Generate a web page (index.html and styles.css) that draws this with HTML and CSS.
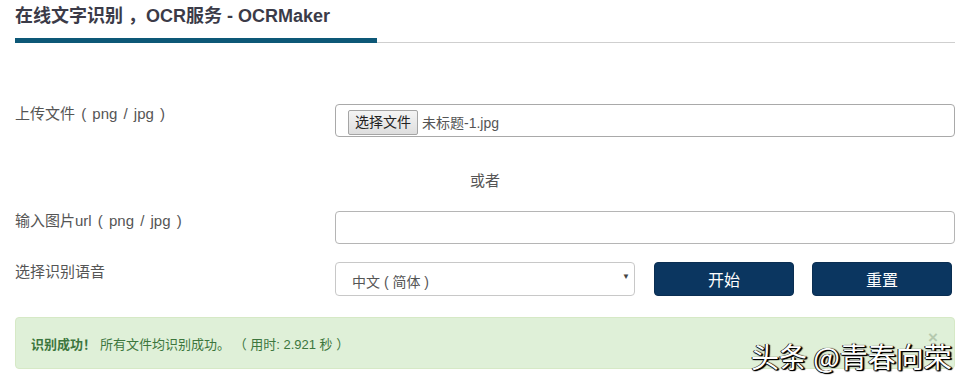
FILE: index.html
```html
<!DOCTYPE html>
<html lang="zh-CN">
<head>
<meta charset="utf-8">
<title>OCRMaker</title>
<link rel="stylesheet" href="styles.css">
</head>
<body>
<div class="page">
  <div class="header">
    <h1 class="title">在线文字识别 ，OCR服务 - OCRMaker</h1>
    <div class="rule"><span class="rule-bar"></span><span class="rule-line"></span></div>
  </div>

  <div class="row row-file">
    <label class="label">上传文件 ( png / jpg )</label>
    <div class="control">
      <div class="file-box"><span class="file-btn">选择文件</span><span class="file-name">未标题-1.jpg</span></div>
    </div>
  </div>

  <div class="or">或者</div>

  <div class="row row-url">
    <label class="label">输入图片url ( png / jpg )</label>
    <div class="control"><div class="text-box"></div></div>
  </div>

  <div class="row row-lang">
    <label class="label">选择识别语音</label>
    <div class="control lang-controls">
      <div class="select-box"><span>中文 ( 简体 )</span><span class="caret">▼</span></div>
      <button class="btn">开始</button>
      <button class="btn">重置</button>
    </div>
  </div>

  <div class="alert">
    <span class="alert-strong">识别成功！</span><span class="alert-text">所有文件均识别成功。 （ 用时: 2.921 秒 ）</span>
    <span class="alert-close">×</span>
  </div>
</div>
<div class="watermark">头条 @青春向荣</div>
</body>
</html>
```

FILE: styles.css
```css
* { box-sizing: border-box; }
html, body { margin: 0; padding: 0; background: #fff; }
body {
  font-family: "Liberation Sans", "Noto Sans CJK SC", sans-serif;
  color: #555;
  font-size: 15px;
  position: relative;
  width: 968px;
  height: 383px;
  overflow: hidden;
}
.page { padding: 0 13px 0 15px; }
.header { padding-top: 4px; }
.title {
  margin: 0;
  font-size: 18px;
  font-weight: bold;
  color: #3b3b48;
  line-height: 24px;
  height: 33px;
}
.rule { display: flex; align-items: flex-end; height: 6px; }
.rule-bar { width: 362px; height: 5px; background: #0d5877; }
.rule-line { flex: 1; height: 1px; background: #cfcfcf; }

.row { display: grid; grid-template-columns: 320px 620px; }
.label { line-height: 20px; color: #555; word-spacing: 2px; }
.row-file { margin-top: 61px; }
.file-box {
  height: 33px;
  border: 1px solid #a9a9a9;
  border-radius: 4px;
  display: flex;
  align-items: center;
  padding-left: 12px;
}
.file-btn {
  font-size: 14px;
  color: #222;
  background: linear-gradient(#f4f4f4, #dedede);
  border: 1px solid #a5a5a5;
  border-radius: 2px;
  padding: 0 6px;
  height: 25px;
  line-height: 23px;
  margin-top: 3px;
}
.file-name { font-size: 14px; color: #555; margin-left: 4px; margin-top: 3px; }

.or { text-align: center; margin-top: 34px; line-height: 20px; color: #555; }

.row-url { margin-top: 20px; }
.text-box { height: 33px; border: 1px solid #b5b5b5; border-radius: 4px; }

.row-lang { margin-top: 18px; }
.lang-controls { display: flex; gap: 18px; }
.select-box {
  width: 300px;
  height: 34px;
  border: 1px solid #c8c8c8;
  border-radius: 4px;
  display: flex;
  align-items: center;
  justify-content: space-between;
  padding: 0 4px 0 16px;
  font-size: 14px;
  color: #555;
  margin-right: 1px;
}
.select-box span:first-child { padding-top: 3px; }
.caret { font-size: 8px; color: #444; margin-top: -6px; }
.btn {
  width: 140px;
  height: 34px;
  background: #0b3660;
  color: #fff;
  border: 1px solid #0a2e52;
  border-radius: 4px;
  font-family: "Liberation Sans", "Noto Sans CJK SC", sans-serif;
  font-size: 16px;
  padding: 0;
}

.alert {
  margin-top: 21px;
  height: 52px;
  background: #dff0d8;
  border: 1px solid #d6e9c6;
  border-radius: 4px;
  color: #3c763d;
  font-size: 13px;
  display: flex;
  align-items: center;
  padding: 0 15px;
  position: relative;
}
.alert-strong { font-weight: bold; margin-right: 4px; }
.alert-close {
  position: absolute;
  right: 16px;
  top: 10px;
  font-size: 17px;
  font-weight: bold;
  color: #b5c9ae;
}
.watermark {
  position: absolute;
  left: 751px;
  top: 338px;
  font-family: "Noto Sans CJK SC", sans-serif;
  font-size: 28px;
  line-height: 36px;
  color: #fff;
  white-space: nowrap;
  text-shadow: 1px 1px 0 #000, -1px 0 0 #222, 0 1px 1px #000, 1px 0 1px #000, 2px 1px 1px #000;
}
```
